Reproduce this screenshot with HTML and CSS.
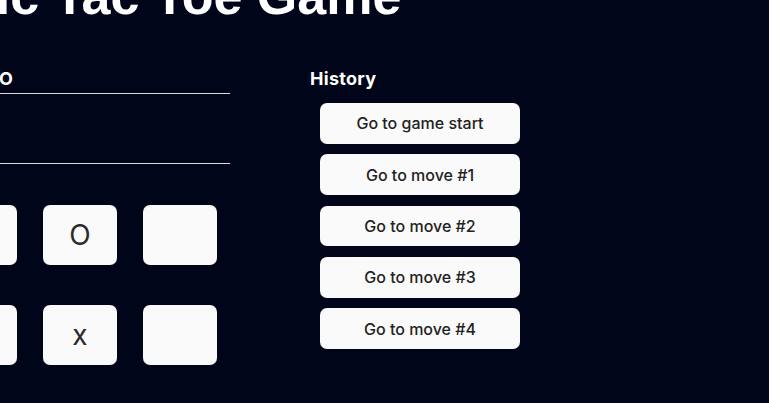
FILE: index.html
```
<!DOCTYPE html>
<html lang="en">
<head>
<meta charset="utf-8">
<title>Tic Tac Toe Game</title>
<link rel="stylesheet" href="styles.css">
</head>
<body>
<h1 class="title">Tic Tac Toe Game</h1>
<div class="layout">
  <section class="game">
    <div class="status"><div class="status-text"><span>Next player: O</span></div></div>
    <div class="info"></div>
    <div class="board">
      <button class="cell">x</button>
      <button class="cell">O</button>
      <button class="cell"></button>
      <button class="cell">O</button>
      <button class="cell">x</button>
      <button class="cell"></button>
      <button class="cell"></button>
      <button class="cell"></button>
      <button class="cell"></button>
    </div>
  </section>
  <section class="history">
    <h2 class="history-title">History</h2>
    <ol class="moves">
      <li><button class="move">Go to game start</button></li>
      <li><button class="move">Go to move #1</button></li>
      <li><button class="move">Go to move #2</button></li>
      <li><button class="move">Go to move #3</button></li>
      <li><button class="move">Go to move #4</button></li>
    </ol>
  </section>
</div>
</body>
</html>
```
FILE: styles.css
```
html, body {
  margin: 0;
  padding: 0;
}
body {
  background: #00051a;
  color: #fff;
  font-family: Inter, "Noto Sans", sans-serif;
  overflow: hidden;
  height: 403px;
}
.title {
  margin: -30px 0 0 -35px;
  font-family: "Liberation Sans", Arial, sans-serif;
  font-weight: 700;
  font-size: 52px;
  line-height: 52px;
  height: 52px;
  white-space: nowrap;
  color: #fff;
}
.layout {
  display: flex;
  gap: 80px;
  margin: 46px 0 0 -57px;
  align-items: flex-start;
}
.game {
  width: 287px;
}
.status {
  font-weight: 700;
  font-size: 18px;
  line-height: 22px;
  padding-bottom: 3px;
  border-bottom: 1px solid #dcdcdc;
}
.status-text {
  width: 70px;
  display: flex;
  justify-content: flex-end;
  white-space: nowrap;
}
.info {
  height: 69px;
  border-bottom: 1px solid #dcdcdc;
}
.board {
  margin-top: 41px;
  display: grid;
  grid-template-columns: repeat(3, 74px);
  grid-auto-rows: 60px;
  column-gap: 26px;
  row-gap: 40px;
}
.cell {
  border: none;
  border-radius: 7px;
  background: #fafafa;
  color: #2b2b2b;
  font-family: Inter, "Noto Sans", sans-serif;
  font-size: 28px;
  padding: 0;
}
.history-title {
  margin: 0;
  font-size: 18px;
  line-height: 22px;
  font-weight: 700;
  letter-spacing: 0.3px;
}
.moves {
  list-style: none;
  margin: 13px 0 0;
  padding: 0 0 0 10px;
  display: flex;
  flex-direction: column;
  gap: 10.67px;
}
.move {
  width: 200px;
  height: 40.67px;
  border: none;
  border-radius: 7px;
  background: #fafafa;
  color: #222;
  font-family: Inter, "Noto Sans", sans-serif;
  font-weight: 500;
  font-size: 16px;
  padding: 0;
}
```
